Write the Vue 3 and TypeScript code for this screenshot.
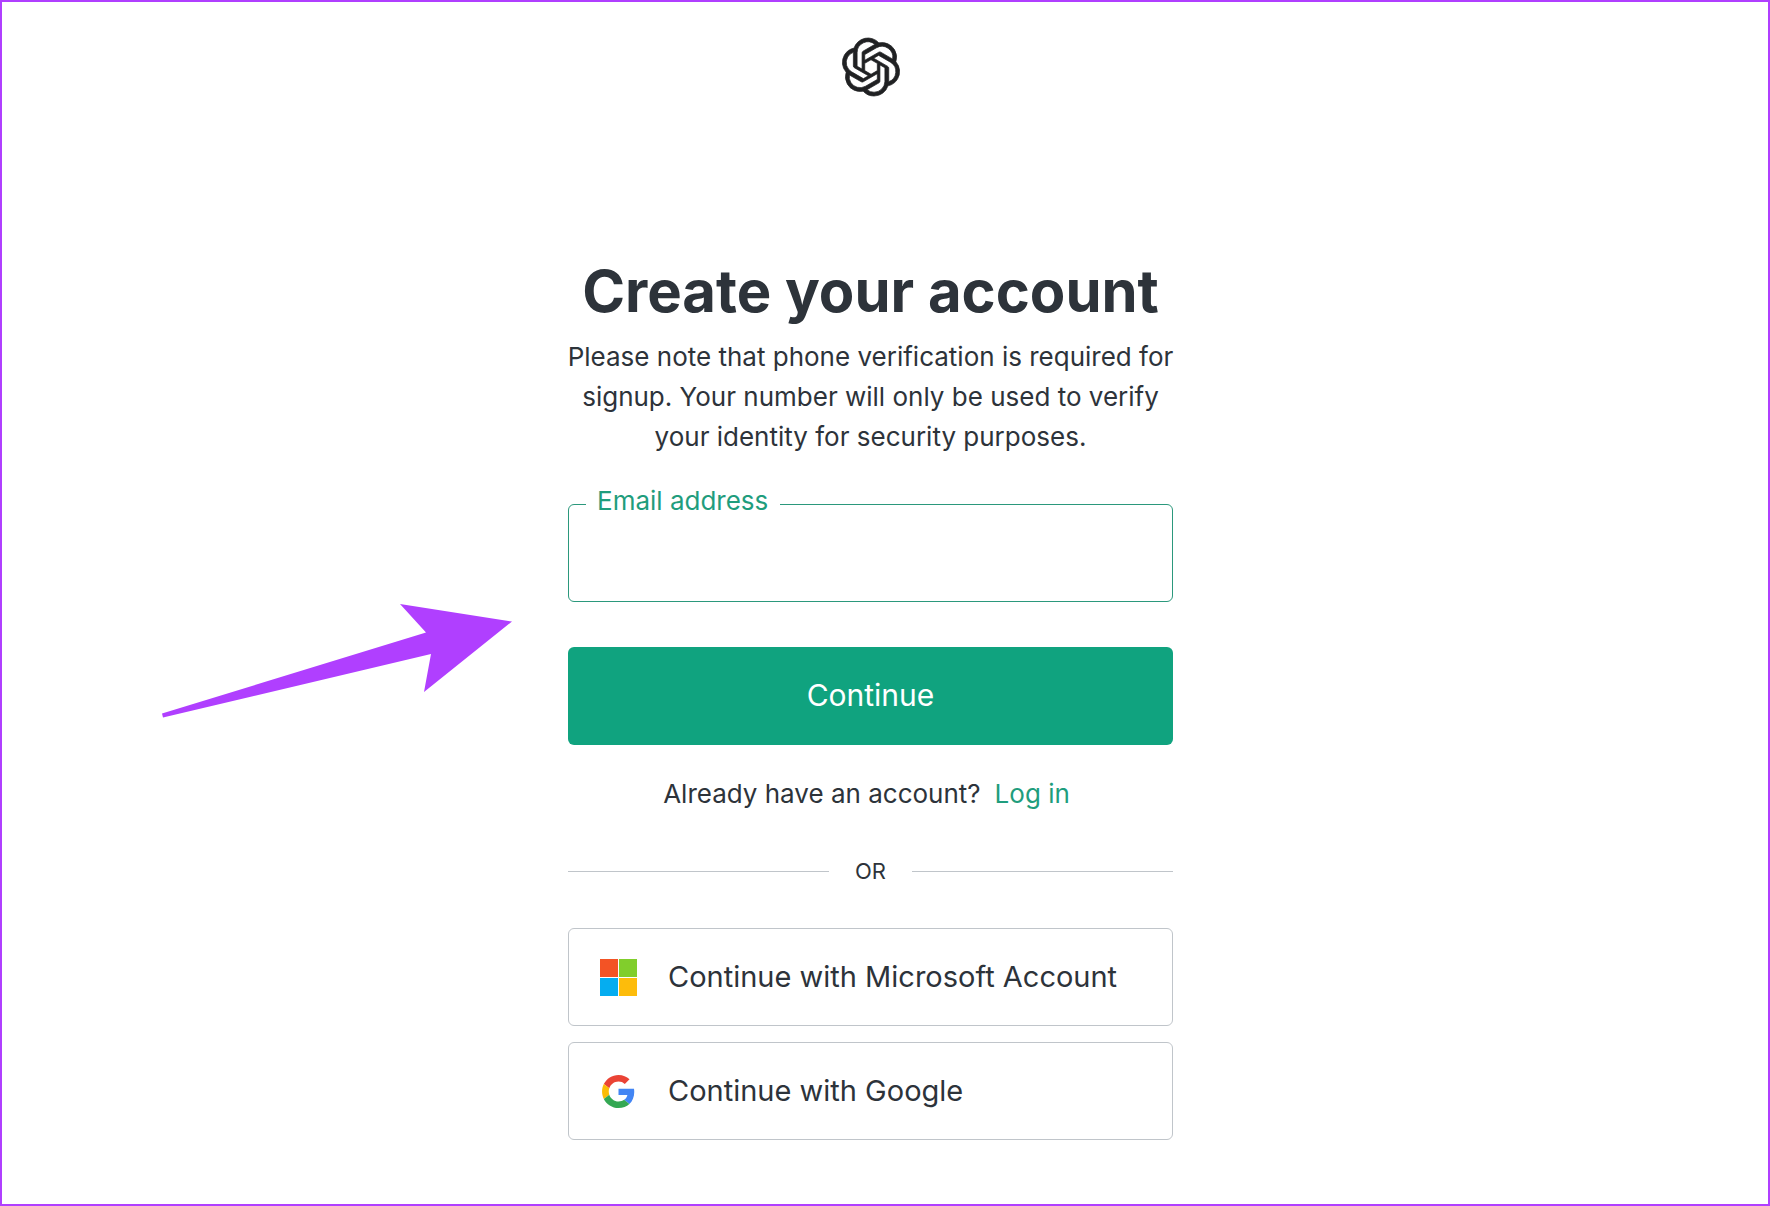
<script setup lang="ts">
import { ref } from 'vue'

const email = ref('')
</script>

<template>
  <div class="page">
    <header class="header">
      <svg class="logo" viewBox="0 0 24 24" role="img" aria-label="OpenAI" fill="#202123" stroke="#202123" stroke-width="0.3">
        <path d="M22.2819 9.8211a5.9847 5.9847 0 0 0-.5157-4.9108 6.0462 6.0462 0 0 0-6.5098-2.9A6.0651 6.0651 0 0 0 4.9807 4.1818a5.9847 5.9847 0 0 0-3.9977 2.9 6.0462 6.0462 0 0 0 .7427 7.0966 5.98 5.98 0 0 0 .511 4.9107 6.051 6.051 0 0 0 6.5146 2.9001A5.9847 5.9847 0 0 0 13.2599 24a6.0557 6.0557 0 0 0 5.7718-4.2058 5.9894 5.9894 0 0 0 3.9977-2.9001 6.0557 6.0557 0 0 0-.7475-7.0729zm-9.022 12.6081a4.4755 4.4755 0 0 1-2.8764-1.0408l.1419-.0804 4.7783-2.7582a.7948.7948 0 0 0 .3927-.6813v-6.7369l2.02 1.1686a.071.071 0 0 1 .038.052v5.5826a4.504 4.504 0 0 1-4.4945 4.4944zm-9.6607-4.1254a4.4708 4.4708 0 0 1-.5346-3.0137l.142.0852 4.783 2.7582a.7712.7712 0 0 0 .7806 0l5.8428-3.3685v2.3324a.0804.0804 0 0 1-.0332.0615L9.74 19.9502a4.4992 4.4992 0 0 1-6.1408-1.6464zM2.3408 7.8956a4.485 4.485 0 0 1 2.3655-1.9728V11.6a.7664.7664 0 0 0 .3879.6765l5.8144 3.3543-2.0201 1.1685a.0757.0757 0 0 1-.071 0l-4.8303-2.7865A4.504 4.504 0 0 1 2.3408 7.872zm16.5963 3.8558L13.1038 8.364 15.1192 7.2a.0757.0757 0 0 1 .071 0l4.8303 2.7913a4.4944 4.4944 0 0 1-.6765 8.1042v-5.6772a.79.79 0 0 0-.407-.667zm2.0107-3.0231l-.142-.0852-4.7735-2.7818a.7759.7759 0 0 0-.7854 0L9.409 9.2297V6.8974a.0662.0662 0 0 1 .0284-.0615l4.8303-2.7866a4.4992 4.4992 0 0 1 6.6802 4.66zM8.3065 12.863l-2.02-1.1638a.0804.0804 0 0 1-.038-.0567V6.0742a4.4992 4.4992 0 0 1 7.3757-3.4537l-.142.0805L8.704 5.459a.7948.7948 0 0 0-.3927.6813zm1.0976-2.3654l2.602-1.4998 2.6069 1.4998v2.9994l-2.5974 1.4997-2.6067-1.4997Z" />
      </svg>
    </header>

    <main class="card">
      <h1 class="title">Create your account</h1>
      <p class="note">
        Please note that phone verification is required for signup. Your number will only be used to
        verify your identity for security purposes.
      </p>

      <form class="form" @submit.prevent>
        <div class="field">
          <input id="email" v-model="email" class="input" type="email" autocomplete="email" />
          <label class="label" for="email">Email address</label>
          <svg class="arrow" viewBox="0 0 350 114" aria-hidden="true">
            <path fill="#b03fff" d="M0 109.500 264 28.500 238 0 350 17.500 262 88 269 50 1 113.500Z" />
          </svg>
        </div>
        <button class="submit" type="submit">Continue</button>
      </form>

      <p class="login">
        <span>Already have an account?</span>
        <a class="link" href="#login">Log in</a>
      </p>

      <div class="divider">OR</div>

      <div class="providers">
        <button class="provider" type="button">
          <svg class="icon" viewBox="0 0 37 37" aria-hidden="true">
            <path fill="#f35325" d="M0 0h18v18H0z" />
            <path fill="#81ce2c" d="M19 0h18v18H19z" />
            <path fill="#05adf0" d="M0 19h18v18H0z" />
            <path fill="#fdbc0b" d="M19 19h18v18H19z" />
          </svg>
          <span>Continue with Microsoft Account</span>
        </button>
        <button class="provider" type="button">
          <svg class="icon" viewBox="-3 -3 54 54" aria-hidden="true">
            <path fill="#ea4335" d="M24 9.500c3.540 0 6.710 1.220 9.210 3.600l6.850-6.850C35.900 2.380 30.470 0 24 0 14.620 0 6.510 5.380 2.560 13.220l7.980 6.190C12.430 13.720 17.740 9.500 24 9.500z" />
            <path fill="#4285f4" d="M46.980 24.550c0-1.570-.15-3.090-.38-4.550H24v9.020h12.940c-.58 2.960-2.260 5.480-4.780 7.180l7.730 6c4.510-4.180 7.090-10.360 7.090-17.650z" />
            <path fill="#fbbc05" d="M10.530 28.590c-.48-1.450-.76-2.990-.76-4.590s.27-3.140.76-4.590l-7.980-6.190C.92 16.460 0 20.120 0 24c0 3.880.92 7.540 2.560 10.780l7.970-6.190z" />
            <path fill="#34a853" d="M24 48c6.480 0 11.930-2.130 15.890-5.810l-7.730-6c-2.150 1.450-4.920 2.300-8.160 2.300-6.260 0-11.570-4.220-13.470-9.910l-7.980 6.190C6.510 42.620 14.620 48 24 48z" />
          </svg>
          <span>Continue with Google</span>
        </button>
      </div>
    </main>
  </div>
</template>

<style>
body {
  margin: 0;
  background: #fff;
}
</style>

<style scoped>
.page {
  box-sizing: border-box;
  min-height: 100vh;
  padding: 36px 29px 64px 0;
  border: 2px solid #b03fff;
  display: flex;
  flex-direction: column;
  align-items: center;
  color: #2d333a;
  font-family: Inter, "Liberation Sans", sans-serif;
  font-size: 26px;
  line-height: 40px;
}

.header {
  display: flex;
  margin-bottom: 163px;
}

.logo {
  width: 58px;
  height: 58px;
  overflow: visible;
}

.card {
  width: 100%;
  max-width: 605px;
}

.title {
  margin: 0 0 14px;
  font-size: 58px;
  font-weight: 700;
  line-height: 64px;
  text-align: center;
}

.note {
  margin: 0 -8px 47px;
  text-align: center;
}

.form {
  display: flex;
  flex-direction: column;
  gap: 45px;
}

.field {
  position: relative;
  display: flex;
}

.input {
  box-sizing: border-box;
  width: 100%;
  height: 98px;
  padding: 0 28px;
  border: 1px solid #2b987c;
  border-radius: 6px;
  outline: none;
  background: #fff;
  color: inherit;
  font: inherit;
}

.label {
  position: absolute;
  top: -23px;
  left: 18px;
  padding: 0 12px 0 11px;
  background: #fff;
  color: #1f9d7d;
}

.arrow {
  position: absolute;
  top: 100px;
  right: calc(100% + 56px);
  width: 350px;
  height: 114px;
}

.submit {
  height: 98px;
  padding: 0 0 2px;
  border: 0;
  border-radius: 6px;
  background: #10a37f;
  color: #fff;
  font: inherit;
  font-size: 30px;
}

.login {
  display: flex;
  justify-content: center;
  margin: 29px 0 37px;
}

.link {
  padding: 0 8px 0 14px;
  color: #1f9d7d;
  text-decoration: none;
}

.divider {
  display: flex;
  align-items: center;
  gap: 26px;
  margin-bottom: 37px;
  font-size: 22px;
}

.divider::before,
.divider::after {
  content: "";
  flex: 1;
  height: 1px;
  background: #c0c5ca;
}

.providers {
  display: flex;
  flex-direction: column;
  gap: 16px;
}

.provider {
  display: flex;
  align-items: center;
  gap: 31px;
  height: 98px;
  padding: 0 31px;
  border: 1px solid #c0c5ca;
  border-radius: 6px;
  background: #fff;
  color: inherit;
  font: inherit;
  font-size: 29px;
}

.icon {
  flex: none;
  width: 37px;
  height: 37px;
}
</style>
